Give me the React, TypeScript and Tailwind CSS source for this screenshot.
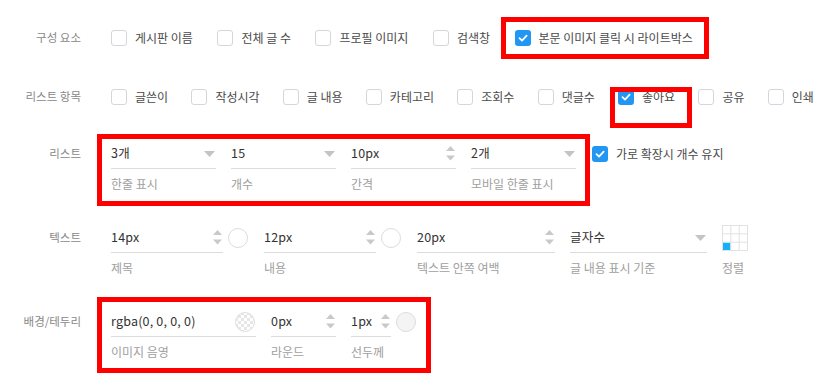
import React from "react";

const FONT = { fontFamily: '"Noto Sans CJK KR", "Noto Sans", sans-serif' };

function Check({ checked = false }: { checked?: boolean }) {
  if (checked) {
    return (
      <span className="flex h-4 w-4 shrink-0 items-center justify-center rounded-[3px] bg-[#2196f3]">
        <svg width="12" height="12" viewBox="0 0 12 12">
          <polyline points="2.5,6.2 5,8.6 9.6,3.6" fill="none" stroke="#fff" strokeWidth="1.8" strokeLinecap="round" strokeLinejoin="round" />
        </svg>
      </span>
    );
  }
  return <span className="h-4 w-4 shrink-0 rounded-[3px] border border-[#d3d7db] bg-white" />;
}

function CheckItem({ label, checked = false }: { label: string; checked?: boolean }) {
  return (
    <div className="flex items-center gap-2">
      <Check checked={checked} />
      <span className="text-[12px] leading-4 text-[#4a4a4a]">{label}</span>
    </div>
  );
}

function Arrow() {
  return (
    <svg width="11" height="6" viewBox="0 0 11 6" className="shrink-0">
      <polygon points="0,0 11,0 5.5,6" fill="#c4c4c4" />
    </svg>
  );
}

function Spinner() {
  return (
    <svg width="9" height="15" viewBox="0 0 9 15" className="shrink-0">
      <polygon points="0,5 9,5 4.5,0" fill="#c9c9c9" />
      <polygon points="0,9.5 9,9.5 4.5,14.5" fill="#c9c9c9" />
    </svg>
  );
}

function Circle({ fill = "#fff" }: { fill?: string }) {
  return <span className="h-5 w-5 shrink-0 rounded-full border border-[#dcdcdc]" style={{ backgroundColor: fill }} />;
}

function CheckerCircle() {
  return (
    <svg width="20" height="20" viewBox="0 0 20 20" className="shrink-0">
      <defs>
        <pattern id="chk" width="6" height="6" patternUnits="userSpaceOnUse">
          <rect width="6" height="6" fill="#fff" />
          <rect width="3" height="3" fill="#e6e6e6" />
          <rect x="3" y="3" width="3" height="3" fill="#e6e6e6" />
        </pattern>
        <clipPath id="cc">
          <circle cx="10" cy="10" r="9.5" />
        </clipPath>
      </defs>
      <rect width="20" height="20" fill="url(#chk)" clipPath="url(#cc)" />
      <circle cx="10" cy="10" r="9.5" fill="none" stroke="#e0e0e0" />
    </svg>
  );
}

function Field({
  value,
  sub,
  width,
  right,
}: {
  value: string;
  sub: string;
  width: string;
  right?: React.ReactNode;
}) {
  return (
    <div className={`flex flex-col ${width}`}>
      <div className="flex h-[30px] items-center justify-between border-b border-[#dcdcdc] pr-[1px]">
        <span className="text-[12.5px] tracking-[0.2px] text-[#333]">{value}</span>
        {right}
      </div>
      <span className="mt-[7px] text-[12px] leading-4 text-[#a0a0a0]">{sub}</span>
    </div>
  );
}

function Label({ children }: { children: React.ReactNode }) {
  return (
    <div className="flex h-[30px] w-[81px] shrink-0 items-center justify-end text-[11.5px] text-[#888]">
      {children}
    </div>
  );
}

function Grid() {
  return (
    <svg width="26" height="26" viewBox="0 0 26 26" className="shrink-0">
      <rect x="0.5" y="17.5" width="8" height="8" fill="#14b1f6" />
      <g stroke="#e2e2e2" strokeWidth="1" fill="none">
        <rect x="0.5" y="0.5" width="25" height="25" />
        <line x1="8.8" y1="0" x2="8.8" y2="26" />
        <line x1="17.2" y1="0" x2="17.2" y2="26" />
        <line x1="0" y1="8.8" x2="26" y2="8.8" />
        <line x1="0" y1="17.2" x2="26" y2="17.2" />
      </g>
    </svg>
  );
}

export default function App() {
  return (
    <div className="relative h-[390px] w-[840px] overflow-hidden bg-white" style={FONT}>
      {/* Row 1 */}
      <div className="mt-[23px] flex items-center gap-[30px]">
        <Label>구성 요소</Label>
        <div className="flex items-center gap-[24.5px]">
          <CheckItem label="게시판 이름" />
          <CheckItem label="전체 글 수" />
          <CheckItem label="프로필 이미지" />
          <CheckItem label="검색창" />
          <CheckItem label="본문 이미지 클릭 시 라이트박스" checked />
        </div>
      </div>

      {/* Row 2 */}
      <div className="mt-[29px] flex items-center gap-[30px]">
        <Label>리스트 항목</Label>
        <div className="flex items-center gap-[23.25px]">
          <CheckItem label="글쓴이" />
          <CheckItem label="작성시각" />
          <CheckItem label="글 내용" />
          <CheckItem label="카테고리" />
          <CheckItem label="조회수" />
          <CheckItem label="댓글수" />
          <CheckItem label="좋아요" checked />
          <CheckItem label="공유" />
          <CheckItem label="인쇄" />
        </div>
      </div>

      {/* Row 3 */}
      <div className="mt-[27px] flex items-start gap-[30px]">
        <Label>리스트</Label>
        <div className="flex items-start gap-[15px]">
          <Field value="3개" sub="한줄 표시" width="w-[105px]" right={<Arrow />} />
          <Field value="15" sub="개수" width="w-[105px]" right={<Arrow />} />
          <Field value="10px" sub="간격" width="w-[105px]" right={<Spinner />} />
          <Field value="2개" sub="모바일 한줄 표시" width="w-[105px]" right={<Arrow />} />
          <div className="ml-[1px] flex h-[30px] items-center">
            <CheckItem label="가로 확장시 개수 유지" checked />
          </div>
        </div>
      </div>

      {/* Row 4 */}
      <div className="mt-[31px] flex items-start gap-[30px]">
        <Label>텍스트</Label>
        <div className="flex items-start">
          <Field value="14px" sub="제목" width="w-[112px]" right={<Spinner />} />
          <div className="ml-[5px] flex h-[30px] items-center">
            <Circle />
          </div>
          <div className="ml-[16px]">
            <Field value="12px" sub="내용" width="w-[112px]" right={<Spinner />} />
          </div>
          <div className="ml-[5px] flex h-[30px] items-center">
            <Circle />
          </div>
          <div className="ml-[16px]">
            <Field value="20px" sub="텍스트 안쪽 여백" width="w-[138px]" right={<Spinner />} />
          </div>
          <div className="ml-[15px]">
            <Field value="글자수" sub="글 내용 표시 기준" width="w-[137px]" right={<Arrow />} />
          </div>
          <div className="ml-[15px] flex flex-col">
            <div className="flex h-[30px] items-center">
              <Grid />
            </div>
            <span className="mt-[7px] text-[12px] leading-4 text-[#a0a0a0]">정렬</span>
          </div>
        </div>
      </div>

      {/* Row 5 */}
      <div className="mt-[31px] flex items-start gap-[30px]">
        <Label>배경/테두리</Label>
        <div className="flex items-start">
          <Field value="rgba(0, 0, 0, 0)" sub="이미지 음영" width="w-[145px]" right={<CheckerCircle />} />
          <div className="ml-[15px]">
            <Field value="0px" sub="라운드" width="w-[65px]" right={<Spinner />} />
          </div>
          <div className="ml-[15px]">
            <Field value="1px" sub="선두께" width="w-[40px]" right={<Spinner />} />
          </div>
          <div className="ml-[5px] flex h-[30px] items-center">
            <Circle fill="#f4f4f4" />
          </div>
        </div>
      </div>

      {/* Annotation boxes */}
      <div className="pointer-events-none absolute left-[501px] top-[17px] h-[42px] w-[208px] border-[5px] border-[#ff0000]" />
      <div className="pointer-events-none absolute left-[610px] top-[87px] h-[41px] w-[82px] border-[5px] border-[#ff0000]" />
      <div className="pointer-events-none absolute left-[97px] top-[134px] h-[72px] w-[493px] border-[5px] border-[#ff0000]" />
      <div className="pointer-events-none absolute left-[97px] top-[297px] h-[76px] w-[334px] border-[5px] border-[#ff0000]" />
    </div>
  );
}
